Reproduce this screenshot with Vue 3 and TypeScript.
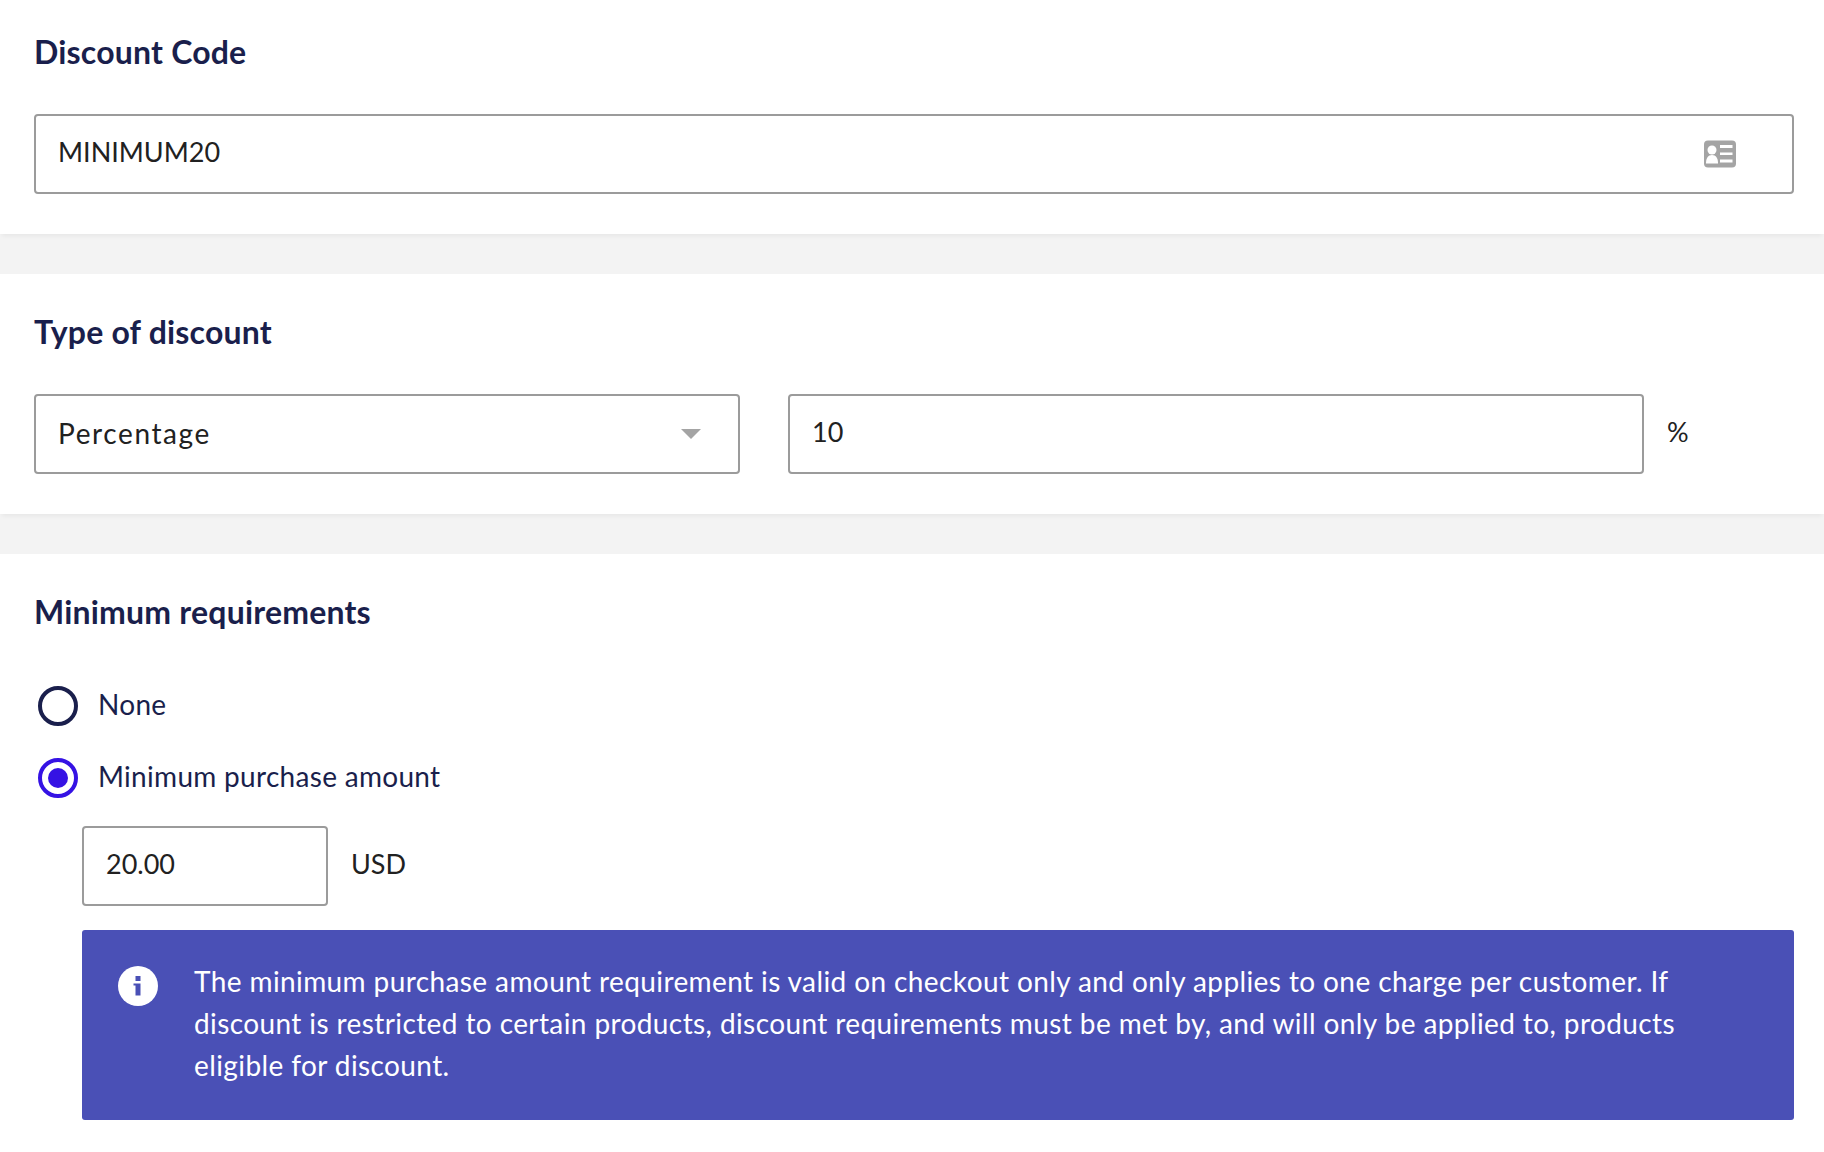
<script setup lang="ts">
const notice: string = 'The minimum purchase amount requirement is valid on checkout only and only applies to one charge per customer. If discount is restricted to certain products, discount requirements must be met by, and will only be applied to, products eligible for discount.'
</script>

<template>
  <main class="page">
    <section class="card first">
      <h2>Discount Code</h2>
      <div class="field code">
        <span>MINIMUM20</span>
        <svg class="id-icon" width="32" height="28" viewBox="0 0 32 28">
          <rect width="32" height="27" y="0.5" rx="4" fill="#a4a4a4" />
          <circle cx="8" cy="10" r="4.5" fill="#fff" />
          <path d="M2 23.500c0-5.500 2-8.500 6-8.500s6 3 6 8.500z" fill="#fff" />
          <path d="M16 5h12.500v3H16zM16 12.500h12.500V15H16zM16 19.500h12.500v3H16z" fill="#fff" />
        </svg>
      </div>
    </section>

    <section class="card second">
      <h2>Type of discount</h2>
      <div class="type-row">
        <div class="field select">
          <span>Percentage</span>
          <i class="caret"></i>
        </div>
        <div class="field amount"><span>10</span></div>
        <span class="unit">%</span>
      </div>
    </section>

    <section class="card third">
      <h2>Minimum requirements</h2>
      <div class="radio">
        <i class="dot"></i>
        <span>None</span>
      </div>
      <div class="radio on">
        <i class="dot"></i>
        <span>Minimum purchase amount</span>
      </div>
      <div class="nested">
        <div class="min-row">
          <div class="field small"><span>20.00</span></div>
          <span class="currency">USD</span>
        </div>
        <div class="notice">
          <svg class="info" width="40" height="40" viewBox="0 0 40 40">
            <circle cx="20" cy="20" r="20" fill="#fff" />
            <rect x="17.500" y="10" width="5" height="5" fill="#4a50b6" />
            <path d="M15.500 17.500h7v12h-5v-10h-2z" fill="#4a50b6" />
          </svg>
          <p>{{ notice }}</p>
        </div>
      </div>
    </section>
  </main>
</template>

<style>
html, body { margin: 0; background: #f3f3f3; }
</style>

<style scoped>
.page {
  width: 1824px;
  height: 1152px;
  overflow: hidden;
  display: flex;
  flex-direction: column;
  gap: 40px;
  font-family: "Lato", "Noto Sans", sans-serif;
  color: #212121;
}
.card {
  box-sizing: border-box;
  background: #fff;
  padding: 36px 30px 0 34px;
  box-shadow: 0 4px 4px -2px rgba(0, 0, 0, 0.05);
}
.first { height: 234px; padding-top: 30px; }
.second { height: 240px; }
.third { flex: 1; }
h2 {
  margin: 0 0 40px;
  height: 44px;
  line-height: 44px;
  font-size: 32px;
  font-weight: 700;
  letter-spacing: 0.2px;
  color: #1a1f4c;
}
.third h2 { margin-bottom: 52px; }
.field {
  box-sizing: border-box;
  height: 80px;
  border: 2px solid #9b9b9b;
  border-radius: 4px;
  padding: 0 22px;
  display: flex;
  align-items: center;
  justify-content: space-between;
  font-size: 27px;
  background: #fff;
}
.field span { position: relative; top: -3px; }
.id-icon { margin-right: 34px; }
.type-row { display: flex; align-items: center; }
.select { width: 706px; font-size: 28px; letter-spacing: 1.6px; padding-right: 37px; }
.select span { top: -1px; }
.caret {
  border-left: 10px solid transparent;
  border-right: 10px solid transparent;
  border-top: 10px solid #a4a4a4;
}
.amount { width: 856px; margin-left: 48px; }
.unit { margin-left: 23px; font-size: 27px; position: relative; top: -3px; }
.radio {
  display: flex;
  align-items: center;
  height: 40px;
  margin: 0 0 32px 4px;
  font-size: 28px;
  letter-spacing: 0.3px;
  color: #1a1f4c;
  gap: 20px;
}
.radio span { margin-top: -4px; }
.dot {
  box-sizing: border-box;
  width: 40px;
  height: 40px;
  border: 4px solid #1a1f4c;
  border-radius: 50%;
  display: flex;
  align-items: center;
  justify-content: center;
}
.on .dot { border-color: #3512e4; }
.on .dot::after {
  content: "";
  width: 20px;
  height: 20px;
  border-radius: 50%;
  background: #3512e4;
}
.nested { margin-left: 48px; margin-top: -4px; }
.min-row { display: flex; align-items: center; }
.small { width: 246px; }
.currency { margin-left: 23px; font-size: 27px; position: relative; top: -3px; }
.notice {
  margin-top: 24px;
  box-sizing: border-box;
  height: 190px;
  background: #4a50b6;
  border-radius: 3px;
  padding: 36px 100px 0 36px;
  display: flex;
  gap: 36px;
  color: #fff;
}
.info { flex: none; }
.notice p {
  margin: -6px 0 0;
  font-size: 28px;
  letter-spacing: 0.4px;
  line-height: 42px;
}
</style>
